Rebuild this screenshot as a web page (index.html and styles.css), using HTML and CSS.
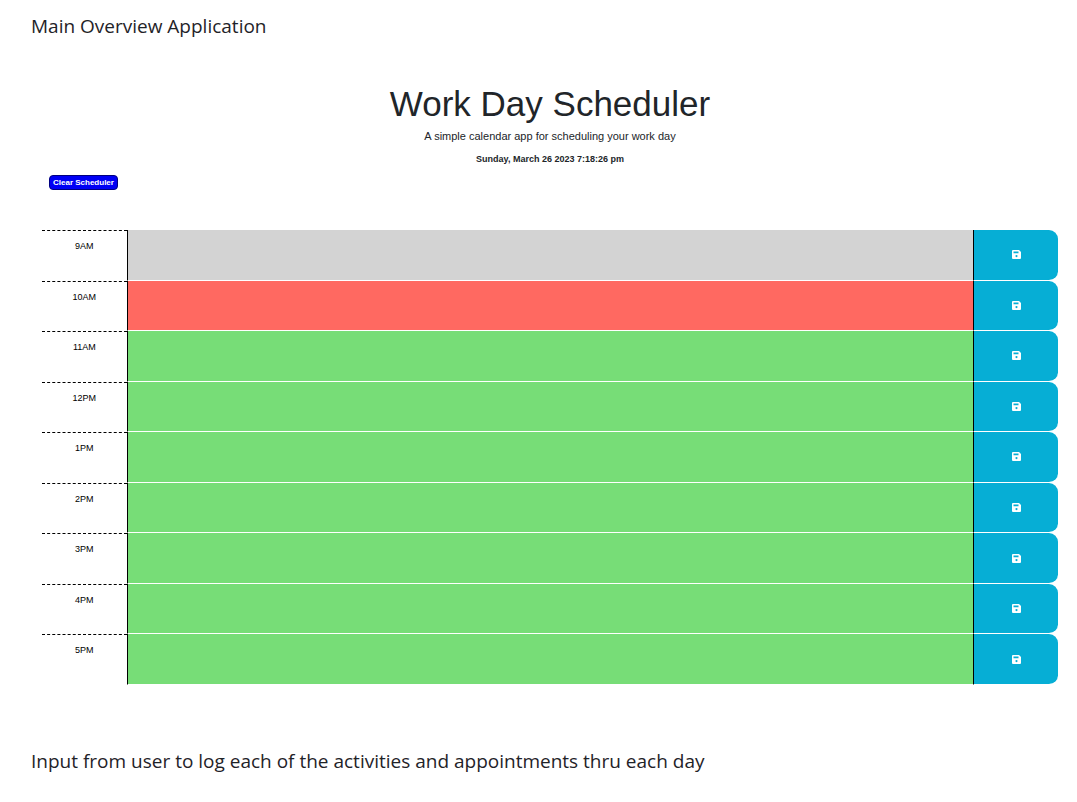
FILE: index.html
```html
<!DOCTYPE html>
<html lang="en">
<head>
<meta charset="utf-8">
<meta name="viewport" content="width=device-width, initial-scale=1">
<title>Work Day Scheduler</title>
<link rel="stylesheet" href="styles.css">
</head>
<body>
<main class="page">
  <p class="caption">Main Overview Application</p>
  <section class="app">
    <header class="intro">
      <h1 class="title">Work Day Scheduler</h1>
      <p class="lead">A simple calendar app for scheduling your work day</p>
      <p class="date">Sunday, March 26 2023 7:18:26 pm</p>
    </header>
    <button class="clear" type="button">Clear Scheduler</button>
    <div class="schedule" id="schedule"></div>
  </section>
  <p class="caption">Input from user to log each of the activities and appointments thru each day</p>
</main>
<script src="script.js"></script>
</body>
</html>
```
FILE: script.js
```js
const hours = [
  ["9AM", "past"], ["10AM", "present"], ["11AM", "future"],
  ["12PM", "future"], ["1PM", "future"], ["2PM", "future"],
  ["3PM", "future"], ["4PM", "future"], ["5PM", "future"]
];

document.getElementById("schedule").innerHTML = hours.map(([hour, state]) => `
  <div class="row">
    <label class="hour" for="slot-${hour}">${hour}</label>
    <textarea class="slot ${state}" id="slot-${hour}"></textarea>
    <button class="save" type="button" aria-label="Save ${hour}">
      <svg class="icon" viewBox="0 0 9 9" aria-hidden="true">
        <path fill="currentColor" fill-rule="evenodd" d="M1 0h6l2 2v6a1 1 0 0 1-1 1H1a1 1 0 0 1-1-1V1a1 1 0 0 1 1-1zM1.5 1.5v1.7h5V1.5zM4.5 5a1.1 1.1 0 1 0 0 2.2 1.1 1.1 0 0 0 0-2.2z"/>
      </svg>
    </button>
  </div>`).join("");
```
FILE: styles.css
```css
* {
  box-sizing: border-box;
}

body {
  margin: 0;
  background: #fff;
  color: #212529;
  font-family: "Liberation Sans", Arial, sans-serif;
}

.page {
  padding: 12px 19px 20px 31px;
}

.caption {
  margin: 0;
  font-family: "Open Sans", "Noto Sans", sans-serif;
  font-size: 19px;
  font-weight: 400;
  line-height: 28px;
  color: #1f2328;
}

.app {
  padding: 42px 0 62px 11px;
}

.intro {
  text-align: center;
}

.title {
  margin: 0;
  font-size: 35px;
  font-weight: 400;
  line-height: 43px;
}

.lead {
  margin: 0;
  font-size: 11px;
  line-height: 23px;
}

.date {
  margin: 0;
  font-size: 9px;
  font-weight: 700;
  line-height: 23px;
}

.clear {
  display: block;
  margin: 4px 0 0 7px;
  padding: 0 3px;
  border: 1px solid #000080;
  border-radius: 4px;
  background: #0000f5;
  color: #fff;
  font-family: inherit;
  font-size: 8px;
  font-weight: 700;
  line-height: 13px;
}

.schedule {
  display: grid;
  grid-auto-rows: 1fr;
  min-height: 455px;
  margin-top: 40px;
}

.row {
  display: grid;
  grid-template-columns: 1fr 10fr 1fr;
}

.hour {
  padding-top: 10px;
  border-top: 1px dashed #000;
  font-size: 9px;
  line-height: 11px;
  text-align: center;
  color: #000;
}

.slot {
  display: block;
  width: 100%;
  height: 100%;
  padding: 4px;
  border: 0;
  border-left: 1px solid #000;
  border-bottom: 1px solid #fff;
  resize: none;
  font: inherit;
  font-size: 9px;
}

.past {
  background: #d3d3d3;
}

.present {
  background: #ff6961;
}

.future {
  background: #77dd77;
}

.save {
  display: flex;
  align-items: center;
  justify-content: center;
  padding: 0;
  border: 0;
  border-left: 1px solid #000;
  border-bottom: 1px solid #fff;
  border-radius: 0 9px 9px 0;
  background: #06aed5;
  background-clip: padding-box;
  color: #fff;
}

.icon {
  width: 9px;
  height: 9px;
}
```
